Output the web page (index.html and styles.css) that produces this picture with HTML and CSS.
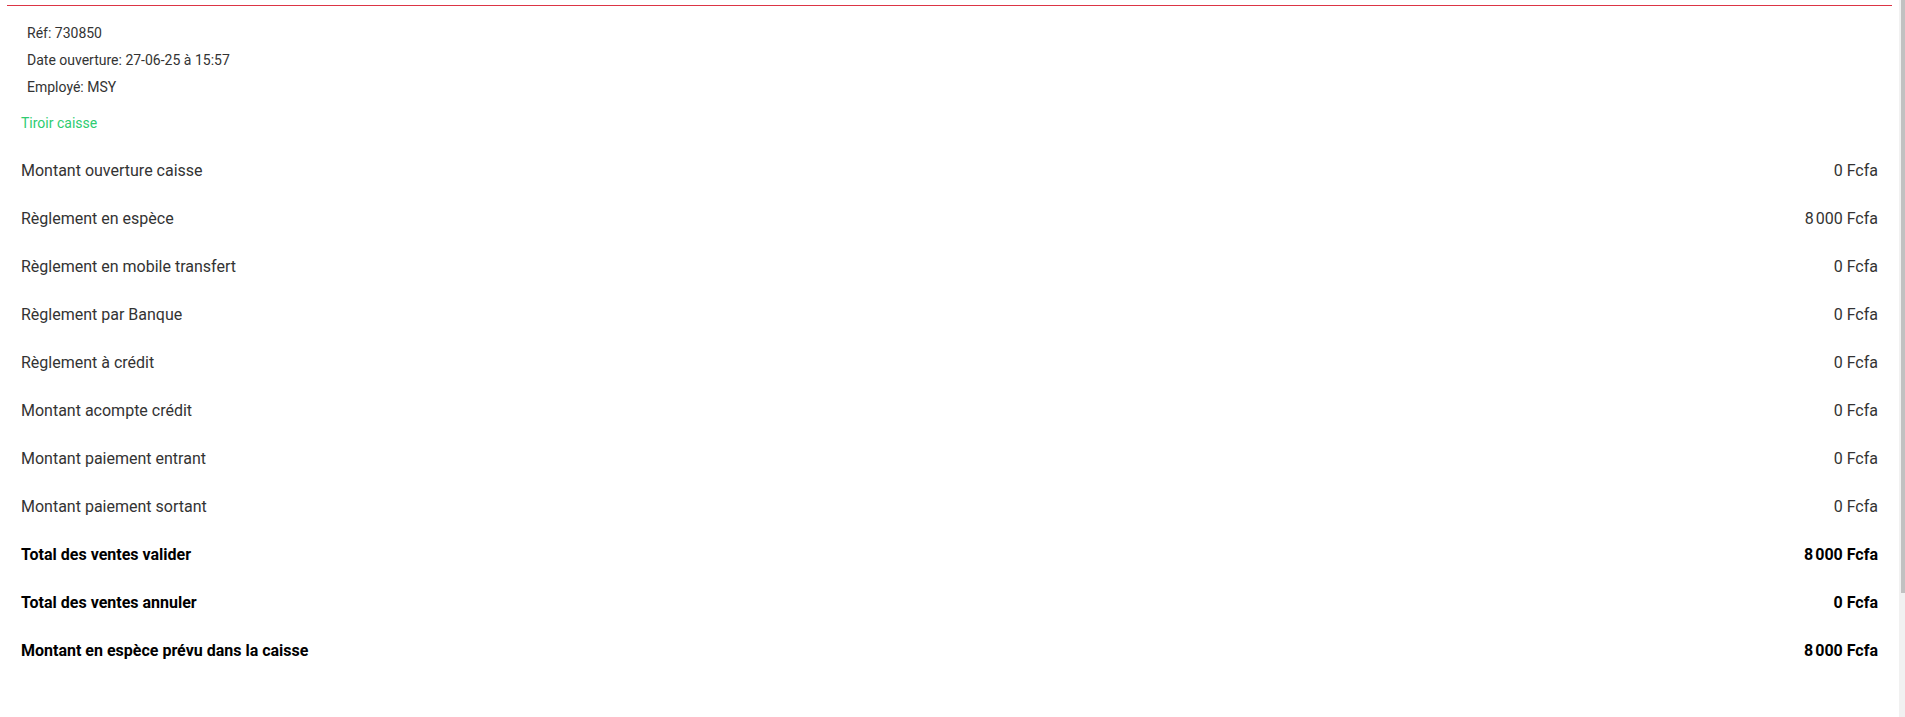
FILE: index.html
```html
<!DOCTYPE html>
<html lang="fr">
<head>
<meta charset="utf-8">
<title>Tiroir caisse</title>
<link rel="stylesheet" href="styles.css">
</head>
<body>
<div class="wrap">
  <main class="main">
    <section class="panel">
      <div class="meta">
        <div class="meta-line">Réf: 730850</div>
        <div class="meta-line">Date ouverture: 27-06-25 à 15:57</div>
        <div class="meta-line">Employé: MSY</div>
      </div>
      <div class="section-title">Tiroir caisse</div>
      <div class="rows">
        <div class="row"><span>Montant ouverture caisse</span><span>0 Fcfa</span></div>
        <div class="row"><span>Règlement en espèce</span><span>8&#8239;000 Fcfa</span></div>
        <div class="row"><span>Règlement en mobile transfert</span><span>0 Fcfa</span></div>
        <div class="row"><span>Règlement par Banque</span><span>0 Fcfa</span></div>
        <div class="row"><span>Règlement à crédit</span><span>0 Fcfa</span></div>
        <div class="row"><span>Montant acompte crédit</span><span>0 Fcfa</span></div>
        <div class="row"><span>Montant paiement entrant</span><span>0 Fcfa</span></div>
        <div class="row"><span>Montant paiement sortant</span><span>0 Fcfa</span></div>
        <div class="row total"><span>Total des ventes valider</span><span>8&#8239;000 Fcfa</span></div>
        <div class="row total"><span>Total des ventes annuler</span><span>0 Fcfa</span></div>
        <div class="row total"><span>Montant en espèce prévu dans la caisse</span><span>8&#8239;000 Fcfa</span></div>
      </div>
    </section>
  </main>
  <div class="scrollbar"><div class="thumb"></div></div>
</div>
</body>
</html>
```

FILE: styles.css
```css
html, body {
  margin: 0;
  padding: 0;
  background: #ffffff;
}
body {
  font-family: Roboto, "Liberation Sans", Arial, sans-serif;
  color: #333333;
  overflow: hidden;
}
.wrap {
  display: flex;
  height: 717px;
}
.main {
  flex: 1;
  padding: 5px 7px 0 7px;
}
.panel {
  border-top: 1px solid #dc3545;
  padding: 0 14px 0 14px;
}
.meta {
  padding: 14px 0 0 6px;
  font-size: 14px;
}
.meta-line {
  line-height: 27px;
}
.section-title {
  margin-top: 12px;
  line-height: 20px;
  font-size: 14px;
  color: #2ecc71;
}
.rows {
  margin-top: 13px;
}
.row {
  display: flex;
  justify-content: space-between;
  align-items: center;
  height: 48px;
  font-size: 16px;
}
.row.total {
  font-weight: 700;
  color: #000;
}
.scrollbar {
  width: 6px;
  background: #f1f1f1;
  padding-left: 2px;
  box-sizing: border-box;
}
.thumb {
  height: 593px;
  background: #c1c1c1;
}
```
